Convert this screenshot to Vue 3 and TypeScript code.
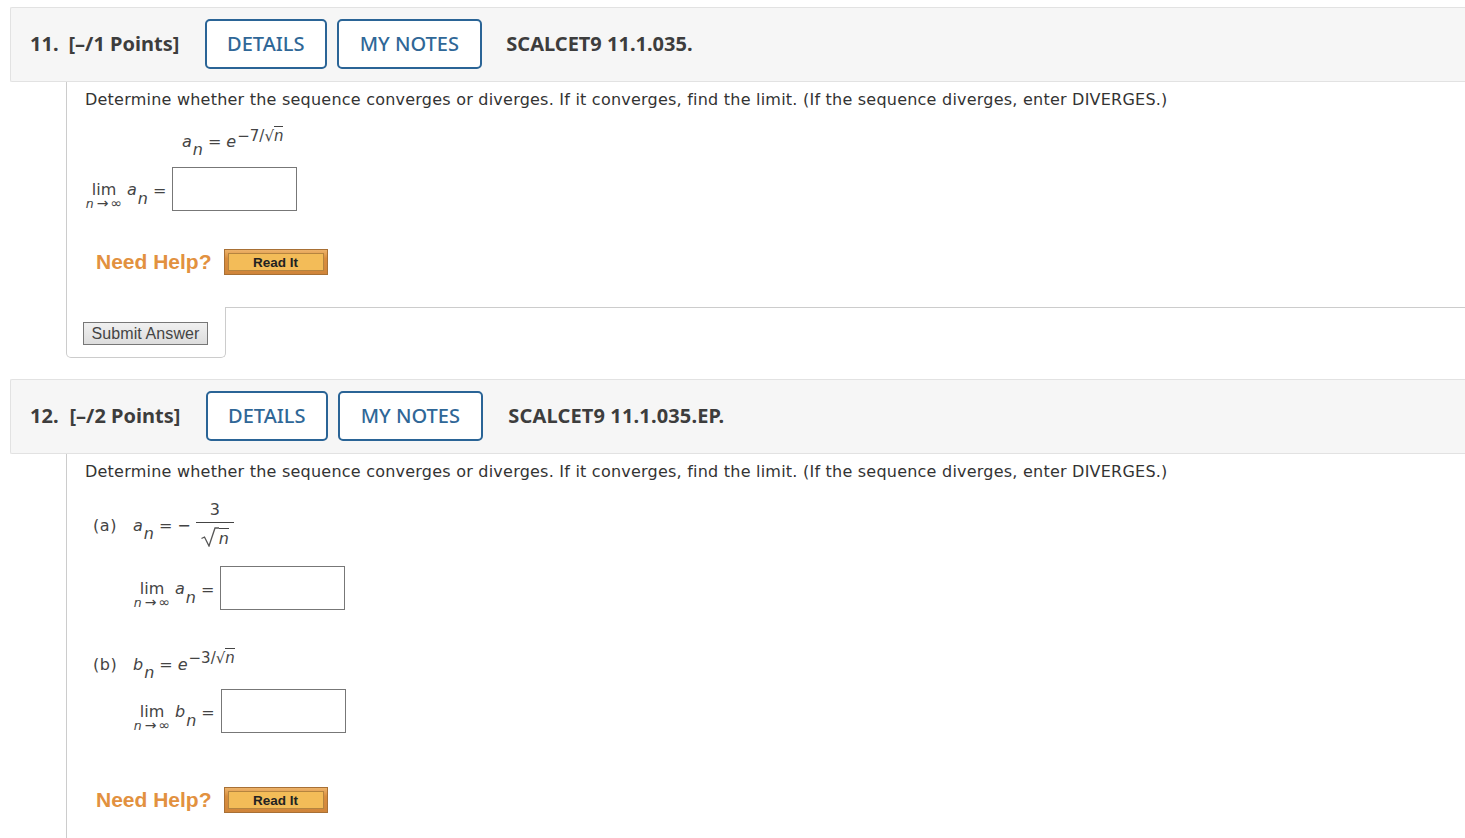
<template>
  <div class="page">
    <section class="question q11">
      <header class="qhead">
        <span class="qnum">11.</span>
        <span class="pts">[–/1 Points]</span>
        <button class="hbtn details">DETAILS</button>
        <button class="hbtn notes">MY NOTES</button>
        <span class="code">SCALCET9 11.1.035.</span>
      </header>
      <div class="qbody">
        <div class="qmain">
          <p class="prompt">{{ prompt }}</p>
          <div class="formula f11">
            <i>a</i><i class="sub">n</i><span class="eq">=</span><i>e</i>
            <span class="exp">−7/<span class="rad">√<i class="over">n</i></span></span>
          </div>
          <div class="limrow r11">
            <span class="lim"><span>lim</span><small><i>n</i><span class="arr">→</span>∞</small></span>
            <i class="limvar">a</i><i class="sub">n</i><span class="eq">=</span>
            <input class="answer" type="text" />
          </div>
          <div class="help h11">
            <span class="need">Need Help?</span>
            <button class="readit"><span>Read It</span></button>
          </div>
        </div>
        <div class="submitwrap">
          <div class="submitbox"><button class="submit">Submit Answer</button></div>
          <div class="submitline"></div>
        </div>
      </div>
    </section>

    <section class="question q12">
      <header class="qhead">
        <span class="qnum">12.</span>
        <span class="pts">[–/2 Points]</span>
        <button class="hbtn details">DETAILS</button>
        <button class="hbtn notes">MY NOTES</button>
        <span class="code">SCALCET9 11.1.035.EP.</span>
      </header>
      <div class="qbody">
        <div class="qmain">
          <p class="prompt">{{ prompt }}</p>
          <div class="part pa">
            <span class="plabel">(a)</span>
            <i>a</i><i class="sub">n</i><span class="eq">=</span><span class="minus">−</span>
            <span class="frac">
              <span class="fnum">3</span>
              <span class="fden">
                <svg width="18" height="20" viewBox="0 0 18 20"><path d="M0.5 11.5 L3.5 10 L8 19 L14 1 L18 1" fill="none" stroke="#555" stroke-width="1.3" /></svg><i class="fn">n</i>
              </span>
            </span>
          </div>
          <div class="limrow ra">
            <span class="lim"><span>lim</span><small><i>n</i><span class="arr">→</span>∞</small></span>
            <i class="limvar">a</i><i class="sub">n</i><span class="eq">=</span>
            <input class="answer" type="text" />
          </div>
          <div class="part pb">
            <span class="plabel">(b)</span>
            <i>b</i><i class="sub">n</i><span class="eq">=</span><i>e</i>
            <span class="exp">−3/<span class="rad">√<i class="over">n</i></span></span>
          </div>
          <div class="limrow rb">
            <span class="lim"><span>lim</span><small><i>n</i><span class="arr">→</span>∞</small></span>
            <i class="limvar">b</i><i class="sub">n</i><span class="eq">=</span>
            <input class="answer" type="text" />
          </div>
          <div class="help h12">
            <span class="need">Need Help?</span>
            <button class="readit"><span>Read It</span></button>
          </div>
        </div>
      </div>
    </section>
  </div>
</template>

<script setup lang="ts">
const prompt: string =
  'Determine whether the sequence converges or diverges. If it converges, find the limit. (If the sequence diverges, enter DIVERGES.)'
</script>

<style>
html, body { margin: 0; background: #fff; overflow: hidden; }
</style>

<style scoped>
.page { width: 1465px; height: 838px; overflow: hidden; padding-top: 7px; box-sizing: border-box; font-family: "DejaVu Sans", Verdana, sans-serif; color: #333; }
.question { margin-left: 10px; }
.q12 { margin-top: 21px; }
.qhead { height: 75px; box-sizing: border-box; display: flex; align-items: center; background: #f6f6f6; border: 1px solid #e2e2e2; border-right: 0; border-radius: 2px 0 0 2px; padding-left: 19px; font-family: "Noto Sans", sans-serif; font-size: 20px; font-weight: 700; color: #3d3d3d; }
.qhead > span { padding-bottom: 2px; }
.qnum { margin-right: 10px; }
.q12 .qnum { margin-right: 11px; }
.pts { margin-right: 26px; }
.code { margin-left: -1px; }
.q12 .code { margin-left: 0; letter-spacing: 0.15px; }
.hbtn { align-self: flex-start; margin-top: 11px; height: 50px; box-sizing: border-box; border: 2px solid #2a6496; border-radius: 5px; background: #fff; color: #2f6797; font: 500 20px "Noto Sans", sans-serif; padding: 0 1px 2px 0; }
.details { width: 122px; margin-right: 10px; }
.notes { width: 145px; margin-right: 25px; }
.qbody { margin-left: 56px; }
.qmain { border-left: 1px solid #ccc; padding-left: 18px; }
.q11 .qmain { height: 225px; }
.q12 .qmain { height: 400px; }
.prompt { margin: 0; padding-top: 8px; font-size: 16px; line-height: 20px; font-family: "DejaVu Sans", sans-serif; letter-spacing: 0.225px; color: #333; white-space: nowrap; }
.formula, .part, .limrow { display: flex; align-items: flex-start; font-size: 16px; color: #444; font-family: "DejaVu Sans", sans-serif; }
.sub { position: relative; top: 8px; margin-left: 1px; }
.eq { margin: 0 5px 0 5px; }
.exp { position: relative; top: -5px; font-size: 15px; margin-left: 1px; }
.pb .exp { top: -6px; }
.rad { white-space: nowrap; }
.over { border-top: 1px solid #444; }
.f11 { margin: 22px 0 0 97px; height: 19px; }
.limrow { height: 44px; }
.r11 { margin-top: 16px; }
.lim { display: flex; flex-direction: column; align-items: center; width: 38px; line-height: 14px; margin-top: 16px; }
.lim small { font-size: 14px; line-height: 12px; white-space: nowrap; }
.lim small i { font-size: 12.5px; }
.arr { margin: 0 2px 0 3px; }
.limvar { margin: 13px 0 0 4px; }
.limrow .sub { margin-top: 14px; margin-left: 1px; }
.limrow .eq { margin: 14px 6px 0 5px; }
.answer { width: 125px; height: 44px; box-sizing: border-box; border: 1px solid #777; background: #fff; margin: 0; padding: 0; }
.help { display: flex; align-items: center; margin-left: 11px; }
.h11 { margin-top: 38px; }
.need { font: bold 21px "Liberation Sans", sans-serif; color: #e2913f; margin-right: 12px; }
.readit { width: 104px; height: 26px; box-sizing: border-box; padding: 3px; background: linear-gradient(#edb36a, #d98e3e 35%, #d0853a); border: 1px solid #a87035; display: flex; }
.readit span { flex: 1; background: #f3bc58; border: 1px solid #b5843f; font: bold 13.5px/17px "Liberation Sans", sans-serif; color: #222; }
.submitwrap { display: flex; }
.submitbox { width: 160px; height: 51px; box-sizing: border-box; border: 1px solid #ccc; border-top: 0; border-radius: 0 0 5px 5px; padding: 15px 0 0 16px; }
.submitline { flex: 1; border-top: 1px solid #ccc; }
.submit { width: 125px; height: 23px; box-sizing: border-box; border: 1px solid #777; background: linear-gradient(#f0f0f0, #ddd); font: 16px "Liberation Sans", sans-serif; letter-spacing: 0.1px; color: #444; padding: 0; }
.pa { margin: 21px 0 0 8px; height: 51px; align-items: flex-start; padding-top: 13px; box-sizing: border-box; }
.plabel { width: 40px; letter-spacing: 0.6px; }
.minus { margin-right: 5px; }
.frac { display: inline-flex; flex-direction: column; align-items: center; position: relative; top: -16px; width: 38px; }
.fnum { padding: 0 0 3px; line-height: 19px; }
.fden { border-top: 1px solid #444; align-self: stretch; display: flex; justify-content: center; padding: 4px 0 0; }
.fn { line-height: 20px; height: 19px; margin-top: 1px; border-top: 1px solid #444; }
.ra { margin: 12px 0 0 48px; }
.pb { margin: 45px 0 0 8px; height: 34px; }
.rb { margin: 0 0 0 48px; }
.h12 { margin-top: 54px; }
</style>
